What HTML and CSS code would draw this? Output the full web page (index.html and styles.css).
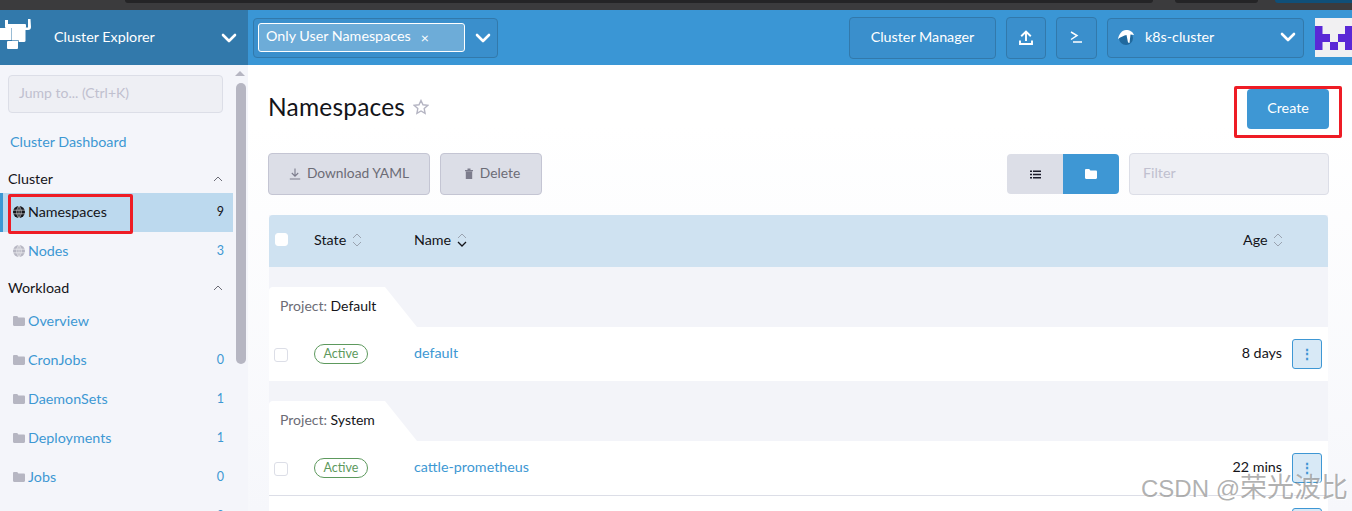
FILE: index.html
```html
<!DOCTYPE html>
<html lang="en">
<head>
<meta charset="utf-8">
<title>Namespaces</title>
<link rel="stylesheet" href="styles.css">
</head>
<body>
<svg class="defs" width="0" height="0" aria-hidden="true">
  <symbol id="folder" viewBox="0 0 12 10"><path d="M0 1.2C0 .5.5 0 1.2 0h3l1.2 1.4h5.4c.7 0 1.2.5 1.2 1.2v6.2c0 .7-.5 1.2-1.2 1.2H1.200C.5 10 0 9.500 0 8.800z"/></symbol>
  <symbol id="chev" viewBox="0 0 16 10"><path d="M2 2l6 6 6-6" fill="none" stroke="currentColor" stroke-width="2.600" stroke-linecap="round" stroke-linejoin="round"/></symbol>
  <symbol id="up" viewBox="0 0 10 6"><path d="M1 5l4-4 4 4" fill="none" stroke="currentColor" stroke-width="1"/></symbol>
  <symbol id="sort" viewBox="0 0 10 16"><path d="M1 6l4-4 4 4" fill="none" stroke="#9aa3b0" stroke-width="1"/><path d="M1 10l4 4 4-4" fill="none" stroke="#9aa3b0" stroke-width="1"/></symbol>
  <symbol id="globe" viewBox="0 0 12 12"><circle cx="6" cy="6" r="6"/><path d="M0 4.200h12M0 7.800h12M6 0v12M6 0C3 3 3 9 6 12M6 0c3 3 3 9 0 12" fill="none" stroke="#fff" stroke-width=".7" opacity=".75"/></symbol>
</svg>

<div class="chrome-strip"><span class="chrome-pill"></span><span class="chrome-pill narrow"></span><span class="chrome-badge"></span></div>

<header class="header">
  <div class="brand">
    <svg class="brand-logo" viewBox="0 0 32 32" aria-hidden="true">
      <g fill="#fff">
        <rect x="5" y="2" width="3" height="7"/>
        <rect x="5" y="6" width="21" height="4" rx="1"/>
        <rect x="0" y="10" width="11.500" height="12"/>
        <rect x="12" y="7" width="13.500" height="17" rx="1.500"/>
        <rect x="7" y="23" width="11" height="8" rx="1"/>
        <path d="M28 1h2.500l.5 8c0 2-1 3-3 3h-3V9.500h3z"/>
      </g>
      <path d="M7 22.500h11.500V24" fill="none" stroke="#3279ab" stroke-width=".7"/>
    </svg>
    <span class="brand-name">Cluster Explorer</span>
    <svg class="chev brand-chev"><use href="#chev"/></svg>
  </div>
  <div class="topbar">
    <div class="ns-select">
      <span class="ns-tag">Only User Namespaces <span class="ns-x">×</span></span>
      <svg class="chev"><use href="#chev"/></svg>
    </div>
    <div class="top-actions">
      <button class="top-btn manager">Cluster Manager</button>
      <button class="top-btn icon-btn" aria-label="Import YAML"><svg width="14" height="15" viewBox="0 0 14 15"><path d="M7 11V1.500M2.200 6.200L7 1.500l4.800 4.700M1 10.500v3.500h12v-3.500" fill="none" stroke="#fff" stroke-width="1.900"/></svg></button>
      <button class="top-btn icon-btn shell" aria-label="Kubectl shell"><svg width="13" height="12" viewBox="0 0 13 12"><path d="M1 1l6 3.500L1 8.500M3 11h9" fill="none" stroke="#fff" stroke-width="1.500"/></svg></button>
      <div class="top-btn cluster">
        <svg class="cluster-icon" viewBox="0 0 16 15"><circle cx="8" cy="8" r="7" fill="#20699e"/><path fill="#fff" d="M0 9C1 4 4 0 8 0c4 0 7 2 8 5l-3.500-.5L11.500 13 10 12.500 8.500 5C6 5.500 3 7 0 9z"/></svg>
        <span class="cluster-name">k8s-cluster</span>
        <svg class="chev"><use href="#chev"/></svg>
      </div>
      <svg class="avatar" viewBox="0 0 37 39" aria-hidden="true"><rect width="37" height="39" fill="#f1f0f2"/><path fill="#5a28d6" d="M0 8h7.500v8H15v8h8v-8h7V8h7v24h-7v-8h-7v8h-8v-8H7.500v8H0z"/></svg>
    </div>
  </div>
</header>

<div class="layout">
  <aside class="sidebar">
    <nav class="nav">
      <div class="jump">Jump to... (Ctrl+K)</div>
      <a class="dash">Cluster Dashboard</a>
      <div class="nav-group"><span>Cluster</span><svg class="caret"><use href="#up"/></svg></div>
      <div class="nav-item active"><svg class="nav-icon"><use href="#globe"/></svg><span class="nav-label">Namespaces</span><span class="count">9</span></div>
      <div class="nav-item"><svg class="nav-icon"><use href="#globe"/></svg><span class="nav-label">Nodes</span><span class="count">3</span></div>
      <div class="nav-group workload"><span>Workload</span><svg class="caret"><use href="#up"/></svg></div>
      <div class="nav-item first"><svg class="nav-icon"><use href="#folder"/></svg><span class="nav-label">Overview</span></div>
      <div class="nav-item"><svg class="nav-icon"><use href="#folder"/></svg><span class="nav-label">CronJobs</span><span class="count">0</span></div>
      <div class="nav-item"><svg class="nav-icon"><use href="#folder"/></svg><span class="nav-label">DaemonSets</span><span class="count">1</span></div>
      <div class="nav-item"><svg class="nav-icon"><use href="#folder"/></svg><span class="nav-label">Deployments</span><span class="count">1</span></div>
      <div class="nav-item"><svg class="nav-icon"><use href="#folder"/></svg><span class="nav-label">Jobs</span><span class="count">0</span></div>
      <div class="nav-item"><svg class="nav-icon"><use href="#folder"/></svg><span class="nav-label">StatefulSets</span><span class="count">0</span></div>
    </nav>
    <div class="scrollbar"><span class="scroll-arrow"></span><span class="scroll-thumb"></span></div>
    <span class="red-box red-ns"></span>
  </aside>

  <main class="main">
    <div class="title-row">
      <h1 class="title">Namespaces</h1>
      <svg class="star" viewBox="0 0 16 16"><path d="M8 1.500l2 4.300 4.700.6-3.500 3.200.9 4.700L8 12l-4.100 2.300.9-4.700L1.300 6.400 6 5.800z" fill="none" stroke="#b4b4c2" stroke-width="1.400"/></svg>
      <button class="create">Create</button>
      <span class="red-box red-create"></span>
    </div>
    <div class="toolbar">
      <button class="btn-grey dl"><svg width="12" height="12" viewBox="0 0 12 12"><path d="M6 .5v7.500M2.800 5L6 8.200 9.200 5M.8 11h10.400" fill="none" stroke="#7c7c8c" stroke-width="1.100"/></svg>Download YAML</button>
      <button class="btn-grey del"><svg width="10" height="11" viewBox="0 0 10 11"><path fill="#7c7c8c" d="M1 2h8v1.200H1zM3.500.6h3V2h-3zM1.800 3.600h6.400V11H1.800z"/></svg>Delete</button>
      <div class="spacer"></div>
      <div class="toggle">
        <span class="toggle-opt"><svg width="11" height="9" viewBox="0 0 11 9"><path d="M0 .5h2v1.600H0zM3 .5h8v1.600H3zM0 3.700h2v1.600H0zM3 3.700h8v1.600H3zM0 6.900h2v1.600H0zM3 6.900h8v1.600H3z" fill="#1b1b2a"/></svg></span>
        <span class="toggle-opt on"><svg width="12" height="10"><use href="#folder" fill="#fff"/></svg></span>
      </div>
      <div class="filter">Filter</div>
    </div>

    <section class="table">
      <div class="thead">
        <span class="cell-check"><span class="check head"></span></span>
        <span class="cell-state">State <svg class="sort"><use href="#sort"/></svg></span>
        <span class="cell-name">Name <svg class="sort" viewBox="0 0 10 16"><path d="M1 6l4-4 4 4" fill="none" stroke="#9aa3b0"/><path d="M1 10l4 4 4-4" fill="none" stroke="#141419" stroke-width="1.300"/></svg></span>
        <span class="cell-age">Age <svg class="sort"><use href="#sort"/></svg></span>
      </div>

      <div class="group">
        <div class="group-tab"><span class="muted">Project:</span> Default</div>
        <div class="row">
          <span class="cell-check"><span class="check"></span></span>
          <span class="cell-state"><span class="badge">Active</span></span>
          <a class="cell-name link">default</a>
          <span class="cell-age-val">8 days</span>
          <button class="dots" aria-label="Actions">⋮</button>
        </div>
      </div>

      <div class="group">
        <div class="group-tab"><span class="muted">Project:</span> System</div>
        <div class="row lined">
          <span class="cell-check"><span class="check"></span></span>
          <span class="cell-state"><span class="badge">Active</span></span>
          <a class="cell-name link">cattle-prometheus</a>
          <span class="cell-age-val">22 mins</span>
          <button class="dots" aria-label="Actions">⋮</button>
        </div>
        <div class="row">
          <span class="cell-check"><span class="check"></span></span>
          <span class="cell-state"><span class="badge">Active</span></span>
          <a class="cell-name link">cattle-system</a>
          <span class="cell-age-val">8 days</span>
          <button class="dots" aria-label="Actions">⋮</button>
        </div>
      </div>
    </section>
  </main>
</div>

<div class="watermark">CSDN @<span class="wm-cjk">荣光波比</span></div>
</body>
</html>
```
FILE: styles.css
```css
* { box-sizing: border-box; }
html, body { margin: 0; height: 511px; overflow: hidden; }
body {
  font-family: Lato, "Noto Sans CJK SC", sans-serif;
  font-size: 14.3px;
  color: #141419;
  background: #fff;
  position: relative;
}
button { font-family: inherit; cursor: pointer; }
.defs { position: absolute; }

.chrome-strip { height: 10px; background: #3b3b3d; display: flex; overflow: hidden; padding-left: 125px; }
.chrome-pill { width: 1028px; height: 3px; background: #242426; border-radius: 0 0 8px 8px; }
.chrome-pill.narrow { width: 83px; margin-left: 22px; }
.chrome-badge { width: 77px; height: 3px; background: #0f4f78; margin-left: 17px; border-radius: 0 0 0 8px; }

.header { height: 55px; display: flex; color: #fff; }
.brand { width: 248px; background: #3279ab; display: flex; align-items: center; position: relative; }
.brand-logo { width: 32px; height: 32px; margin-top: -7px; flex: none; }
.brand-name { margin-left: 22px; flex: 1; padding-bottom: 3px; }
.brand-chev { margin-right: 11px; }
.chev { width: 16px; height: 10px; flex: none; color: #fff; }

.topbar { flex: 1; background: #3a96d5; display: flex; align-items: center; justify-content: space-between; padding-left: 5px; }
.ns-select { width: 245px; height: 40px; border: 1px solid #3279ab; border-radius: 4px; background: #3a8fcc; display: flex; align-items: center; gap: 10px; padding-left: 4px; }
.ns-tag { width: 207px; height: 29px; border: 1px solid #fff; border-radius: 3px; background: #6dacd8; display: flex; align-items: center; padding: 0 7px 4px; gap: 10px; white-space: nowrap; }
.ns-x { font-size: 14px; line-height: 1; margin-top: 5px; }

.top-actions { display: flex; align-items: center; gap: 10px; }
.top-btn { height: 42px; border: 1px solid #3279ab; border-radius: 4px; background: #3a8fcc; color: #fff; font-size: 14.3px; display: flex; align-items: center; justify-content: center; padding: 0 0 1px; }
.manager { width: 147px; padding-bottom: 3px; }
.icon-btn { width: 40px; }
.shell { width: 41px; }
.cluster { width: 197px; height: 40px; justify-content: flex-start; padding-left: 10px; }
.cluster-icon { width: 16px; height: 15px; flex: none; }
.cluster-name { margin-left: 11px; flex: 1; padding-bottom: 2px; }
.cluster .chev { margin-right: 7px; }
.avatar { width: 37px; height: 39px; flex: none; margin-left: 1px; }

.layout { display: flex; height: 446px; overflow: hidden; }
.sidebar { width: 248px; flex: none; background: #f4f5fa; display: flex; position: relative; overflow: hidden; }
.nav { width: 233px; flex: none; }
.jump { margin: 10px 0 0 8px; width: 215px; height: 38px; border: 1px solid #dcdee7; border-radius: 4px; background: #eeeff4; color: #c0c0cf; font-size: 14px; display: flex; align-items: center; padding: 0 0 4px 10px; }
.dash { display: block; margin: 19px 0 0 10px; height: 20px; line-height: 20px; color: #3d98d3; }
.nav-group { height: 20px; margin-top: 17px; padding: 0 10px 0 8px; display: flex; justify-content: space-between; align-items: center; }
.nav-group span { margin-top: -2px; }
.nav-group.workload { margin-top: 7px; }
.caret { width: 10px; height: 6px; color: #6c6c76; }
.nav-item { height: 39px; display: flex; align-items: center; padding: 0 9px 2px 13px; color: #3d98d3; }
.nav-group + .nav-item { margin-top: 4px; }
.nav-item.active { background: #bcd9ee; border-left: 3px solid #3d98d3; padding-left: 10px; color: #141419; }
.nav-icon { width: 12px; height: 12px; fill: #b6b6c2; flex: none; margin-right: 3px; }
.active .nav-icon { fill: #141419; }
.nav-label { flex: 1; }
.count { font-size: 12.5px; }
.scrollbar { flex: 1; position: relative; }
.scroll-arrow { position: absolute; left: 2px; top: 6px; border: 5px solid transparent; border-top: 0; border-bottom: 5px solid #b6b6c2; }
.scroll-thumb { position: absolute; left: 3px; top: 18px; width: 10px; height: 281px; border-radius: 5px; background: #b6b6c2; }

.red-box { position: absolute; border: 3px solid #ee1c25; border-radius: 2px; }
.red-ns { left: 8px; top: 129px; width: 125px; height: 40px; }

.main { flex: 1; padding: 0 23px 0 21px; background: linear-gradient(#fff 60px, #f6f7fb); position: relative; overflow: hidden; }
.title-row { height: 88px; display: flex; align-items: flex-start; position: relative; }
.title { font-size: 24.5px; font-weight: 400; margin: 23px 0 0 -1px; line-height: 38px; letter-spacing: .2px; }
.star { width: 16px; height: 16px; margin: 34px 0 0 8px; }
.create { margin: 24px 0 0 auto; width: 82px; height: 40px; border: 0; border-radius: 4px; background: #3e97d4; color: #fff; font-size: 14.3px; padding: 0 0 3px; }
.red-create { right: -13px; top: 21px; width: 108px; height: 52px; }

.toolbar { height: 42px; display: flex; align-items: center; gap: 10px; margin-left: -1px; }
.spacer { flex: 1; }
.btn-grey { height: 42px; border: 1px solid #c4c5d3; border-radius: 4px; background: #dcdee7; color: #6c6c76; font-size: 13.8px; display: flex; align-items: center; justify-content: center; gap: 6px; padding: 0 0 4px; }
.btn-grey svg { margin-top: 3px; }
.dl { width: 162px; }
.del { width: 102px; padding-left: 2px; }
.toggle { width: 112px; height: 40px; display: flex; border-radius: 4px; overflow: hidden; }
.toggle-opt { flex: 1; background: #dcdee7; display: flex; align-items: center; justify-content: center; }
.toggle-opt.on { background: #3e97d4; }
.filter { width: 200px; height: 42px; border: 1px solid #dcdee7; border-radius: 4px; background: #eeeff4; color: #c0c0cf; display: flex; align-items: center; padding: 0 0 4px 13px; }

.table { margin-top: 20px; width: 1059px; background: #f3f4f9; }
.thead { height: 52px; background: #cfe2f1; display: flex; align-items: center; border-radius: 4px 4px 0 0; padding-bottom: 4px; }
.cell-check { width: 45px; padding-left: 6px; flex: none; display: flex; }
.cell-state { width: 100px; flex: none; display: flex; align-items: center; white-space: pre; }
.cell-name { flex: 1; display: flex; align-items: center; white-space: pre; }
.cell-age { width: 85px; flex: none; display: flex; align-items: center; white-space: pre; }
.sort { width: 10px; height: 16px; margin-left: 2px; margin-top: 2px; }
.check { width: 13px; height: 13px; border: 1px solid #dcdee7; border-radius: 3px; background: #fff; }
.check.head { border-color: #fff; }
.group { padding-top: 20px; }
.group-tab { width: 148px; height: 40px; background: #fff; clip-path: polygon(0 0, 116px 0, 148px 100%, 0 100%); border-radius: 4px 0 0 0; padding: 10px 0 0 11px; font-size: 14px; white-space: nowrap; }
.muted { color: #6c6c76; }
.row { height: 54px; background: #fff; display: flex; align-items: center; padding: 0 6px 0 0; }
.row.lined { border-bottom: 1px solid #dcdee7; height: 55px; }
.row .cell-check { padding-left: 5px; margin-top: 1px; }
.row .check { width: 14px; height: 14px; }
.badge { width: 54px; height: 20px; border: 1px solid #5d995d; border-radius: 10px; color: #5d995d; font-size: 12.5px; display: flex; align-items: center; justify-content: center; padding-bottom: 2px; }
.link { color: #3d98d3; padding-bottom: 4px; }
.cell-age-val { margin-right: 10px; padding-bottom: 4px; }
.dots { width: 30px; height: 30px; border: 1px solid #3e97d4; border-radius: 3px; background: #d8e9f6; color: #3e97d4; font-size: 14px; font-weight: 700; padding: 0; line-height: 1; }

.watermark { position: absolute; right: 4px; top: 471px; font-family: "Liberation Sans", "Noto Sans CJK SC", sans-serif; font-size: 24px; line-height: 30px; color: rgba(125,125,125,.6); text-shadow: 1px 1px 1px rgba(255,255,255,.9); white-space: nowrap; }
.wm-cjk { font-family: "Noto Sans CJK SC", sans-serif; font-size: 27px; }
```
